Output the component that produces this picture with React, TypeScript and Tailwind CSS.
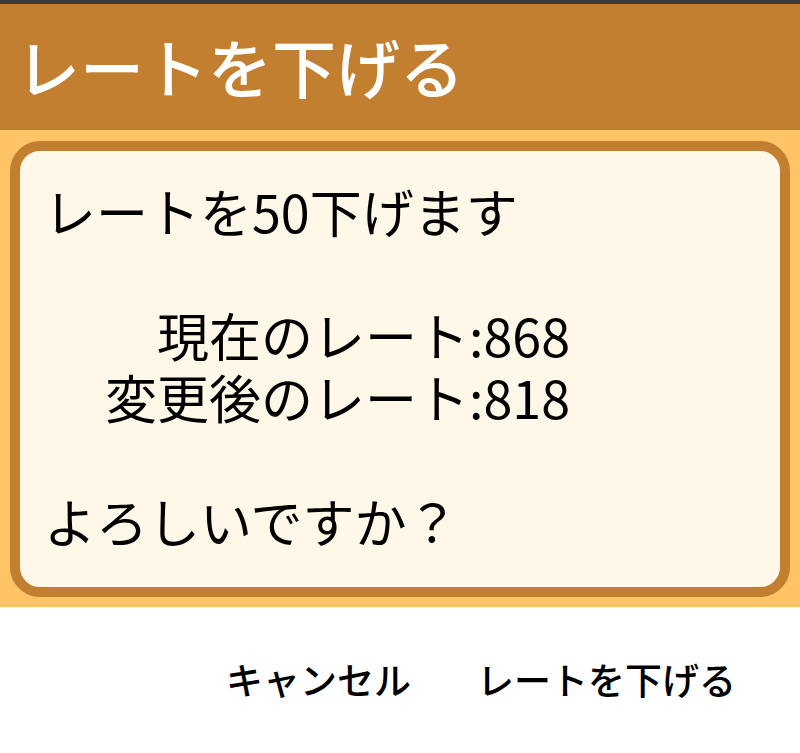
export default function App() {
  const font = { fontFamily: '"Noto Sans CJK JP", "Noto Sans", sans-serif' };
  return (
    <div className="w-[800px] h-[753px] bg-white flex flex-col overflow-hidden" style={font}>
      {/* status strip */}
      <div className="h-[4px] bg-[#3b3b3b] shrink-0" />

      {/* title bar */}
      <div className="h-[126px] bg-[#C17F2F] flex items-center px-[16px] shrink-0">
        <h1 className="text-white text-[64px] font-medium leading-none -mt-[4px]">レートを下げる</h1>
      </div>

      {/* message area */}
      <div className="bg-[#FFC466] px-[10px] pt-[11px] pb-[10px] shrink-0">
        <div className="h-[456px] border-[10px] border-[#C17F2F] rounded-[30px] bg-[#FFF7E8] pl-[24px] pt-[29px] text-black text-[52px] leading-[62px]">
          <p>レートを50下げます</p>
          <p>&nbsp;</p>
          <div className="w-[526px] text-right">
            <p>現在のレート:868</p>
            <p>変更後のレート:818</p>
          </div>
          <p>&nbsp;</p>
          <p>よろしいですか？</p>
        </div>
      </div>

      {/* buttons */}
      <div className="flex-1 flex justify-end items-start pt-[54px] pr-[64px] gap-[66px]">
        <button className="text-black text-[37px] font-medium leading-none">キャンセル</button>
        <button className="text-black text-[37px] font-medium leading-none">レートを下げる</button>
      </div>
    </div>
  );
}
